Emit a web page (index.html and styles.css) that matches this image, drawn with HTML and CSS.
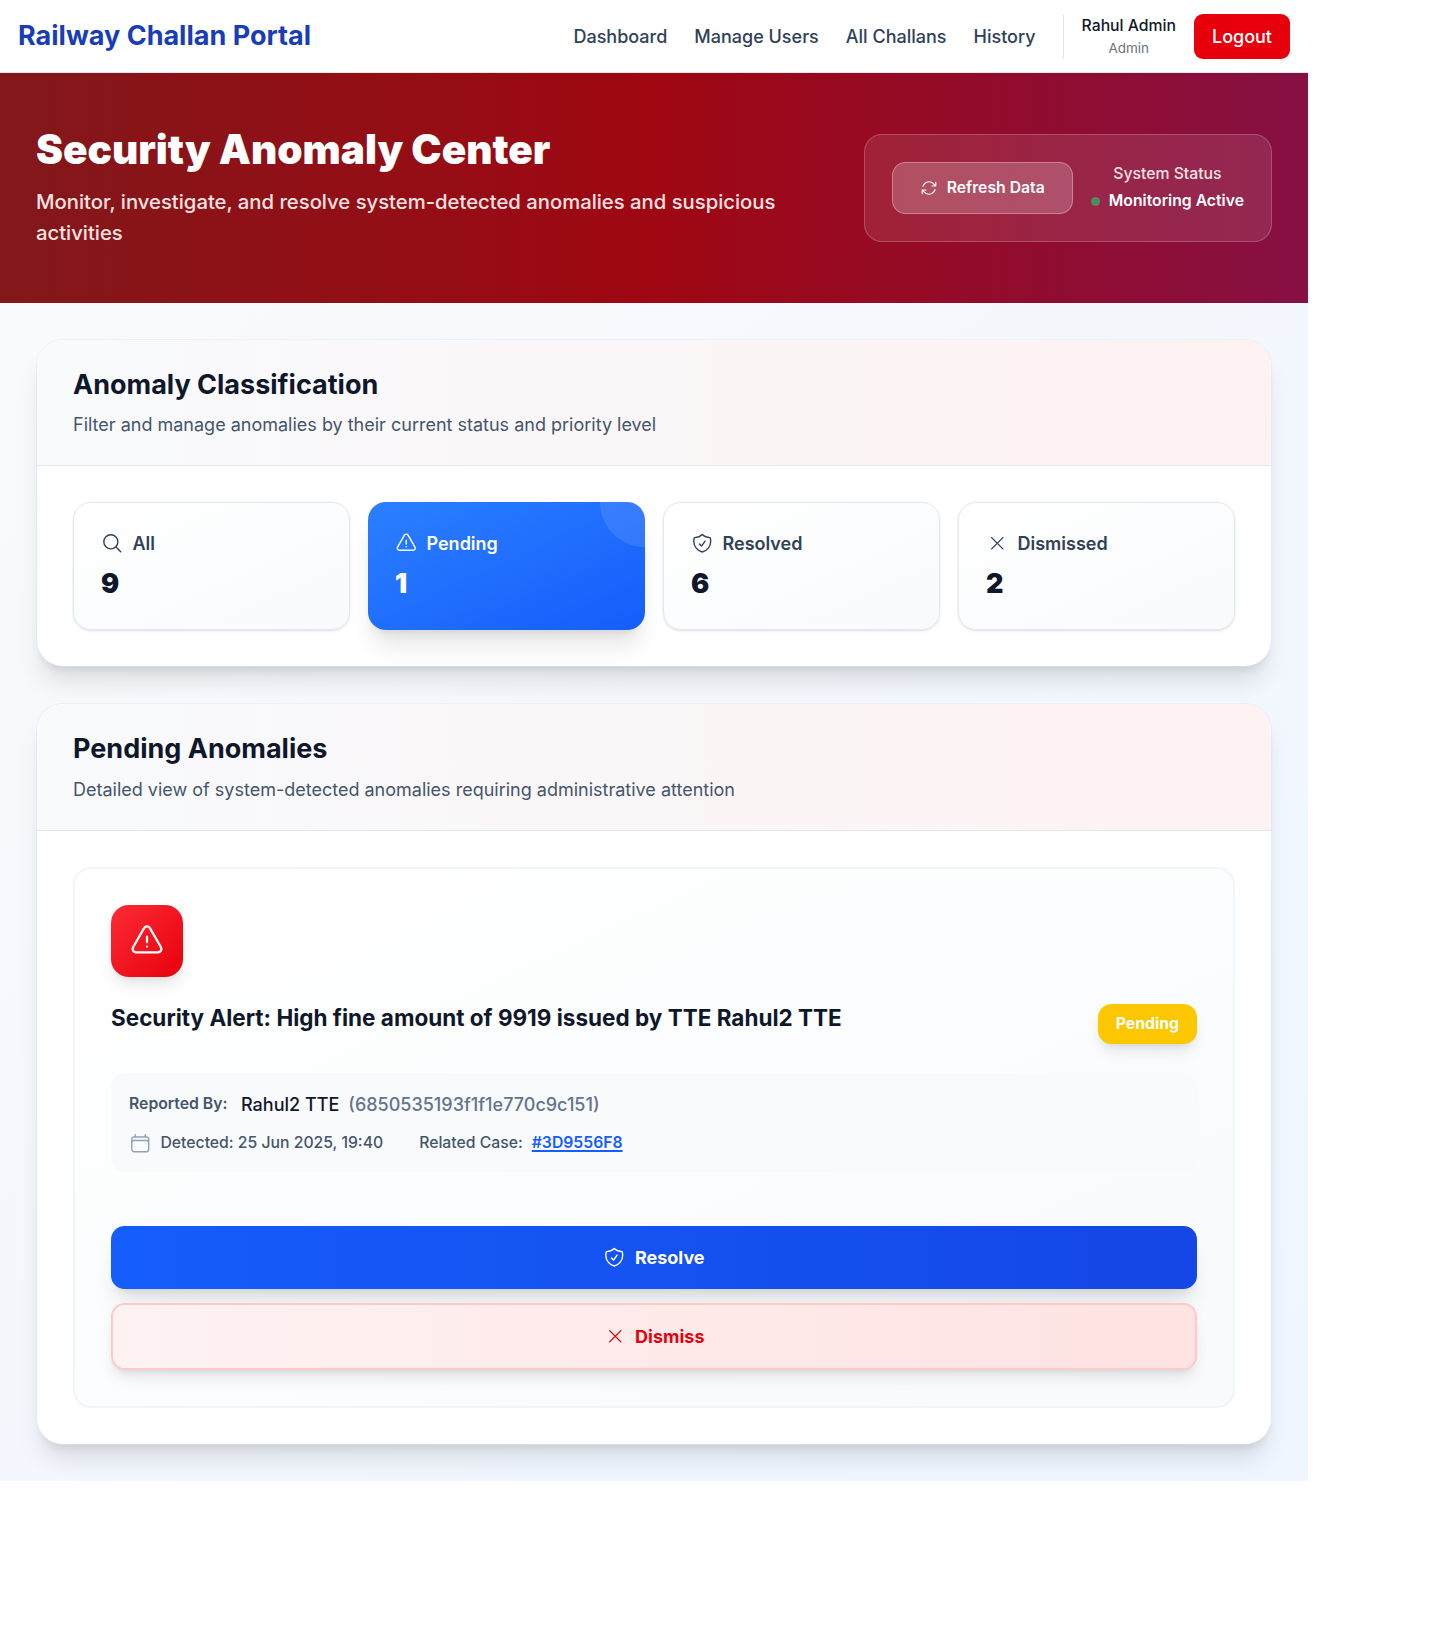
FILE: index.html
```html
<!DOCTYPE html>
<html lang="en">
<head>
<meta charset="utf-8">
<title>Railway Challan Portal</title>
<link rel="stylesheet" href="styles.css">
</head>
<body>
<svg class="sprite" aria-hidden="true">
  <symbol id="i-search" viewBox="0 0 24 24"><path d="m21 21-5.197-5.197m0 0A7.5 7.5 0 1 0 5.196 5.196a7.5 7.5 0 0 0 10.607 10.607Z"/></symbol>
  <symbol id="i-warn" viewBox="0 0 24 24"><path d="M12 9v3.75m-9.303 3.376c-.866 1.5.217 3.374 1.948 3.374h14.71c1.73 0 2.813-1.874 1.948-3.374L13.949 3.378c-.866-1.5-3.032-1.5-3.898 0L2.697 16.126ZM12 15.75h.007v.008H12v-.008Z"/></symbol>
  <symbol id="i-shield" viewBox="0 0 24 24"><path d="M9 12.75 11.25 15 15 9.75m-3-7.036A11.959 11.959 0 0 1 3.598 6 11.99 11.99 0 0 0 3 9.749c0 5.592 3.824 10.29 9 11.623 5.176-1.332 9-6.03 9-11.622 0-1.31-.21-2.571-.598-3.751h-.152c-3.196 0-6.1-1.248-8.25-3.285Z"/></symbol>
  <symbol id="i-x" viewBox="0 0 24 24"><path d="M6 18 18 6M6 6l12 12"/></symbol>
  <symbol id="i-refresh" viewBox="0 0 24 24"><path d="M16.023 9.348h4.992v-.001M2.985 19.644v-4.992m0 0h4.992m-4.993 0 3.181 3.183a8.25 8.25 0 0 0 13.803-3.7M4.031 9.865a8.25 8.25 0 0 1 13.803-3.7l3.181 3.182m0-4.991v4.99"/></symbol>
  <symbol id="i-calendar" viewBox="0 0 24 24"><path d="M6.75 3v2.25M17.25 3v2.25M3 18.75V7.5a2.25 2.25 0 0 1 2.25-2.25h13.5A2.25 2.25 0 0 1 21 7.5v11.25m-18 0A2.25 2.25 0 0 0 5.25 21h13.5A2.25 2.25 0 0 0 21 18.75m-18 0v-7.5A2.25 2.25 0 0 1 5.25 9h13.5A2.25 2.25 0 0 1 21 11.25v7.5"/></symbol>
</svg>
<div class="page">
  <header class="topbar">
    <div class="brand">Railway Challan Portal</div>
    <nav class="nav">
      <a>Dashboard</a>
      <a>Manage Users</a>
      <a>All Challans</a>
      <a>History</a>
      <div class="account">
        <div class="user">
          <span class="user-name">Rahul Admin</span>
          <span class="user-role">Admin</span>
        </div>
        <button class="logout">Logout</button>
      </div>
    </nav>
  </header>

  <section class="hero">
    <div class="hero-text">
      <h1>Security Anomaly Center</h1>
      <p>Monitor, investigate, and resolve system-detected anomalies and suspicious activities</p>
    </div>
    <div class="glass">
      <button class="refresh"><svg class="icon icon-sm"><use href="#i-refresh"/></svg>Refresh Data</button>
      <div class="status">
        <span class="status-label">System Status</span>
        <span class="status-value"><i class="dot"></i>Monitoring Active</span>
      </div>
    </div>
  </section>

  <main class="main">
    <section class="card">
      <div class="card-head">
        <h2>Anomaly Classification</h2>
        <p>Filter and manage anomalies by their current status and priority level</p>
      </div>
      <div class="card-body tiles">
        <div class="tile">
          <div class="tile-label"><svg class="icon"><use href="#i-search"/></svg>All</div>
          <div class="tile-count">9</div>
        </div>
        <div class="tile tile-active">
          <div class="tile-label"><svg class="icon"><use href="#i-warn"/></svg>Pending</div>
          <div class="tile-count">1</div>
        </div>
        <div class="tile">
          <div class="tile-label"><svg class="icon"><use href="#i-shield"/></svg>Resolved</div>
          <div class="tile-count">6</div>
        </div>
        <div class="tile">
          <div class="tile-label"><svg class="icon"><use href="#i-x"/></svg>Dismissed</div>
          <div class="tile-count">2</div>
        </div>
      </div>
    </section>

    <section class="card">
      <div class="card-head">
        <h2>Pending Anomalies</h2>
        <p>Detailed view of system-detected anomalies requiring administrative attention</p>
      </div>
      <div class="card-body">
        <article class="anomaly">
          <div class="alert-icon"><svg class="icon icon-lg"><use href="#i-warn"/></svg></div>
          <div class="anomaly-head">
            <h3>Security Alert: High fine amount of 9919 issued by TTE Rahul2 TTE</h3>
            <span class="badge">Pending</span>
          </div>
          <div class="details">
            <div class="reporter">
              <span class="reporter-label">Reported By:</span>
              <span class="reporter-name">Rahul2 TTE</span>
              <span class="reporter-id">(6850535193f1f1e770c9c151)</span>
            </div>
            <div class="meta">
              <span class="meta-item"><svg class="icon icon-muted"><use href="#i-calendar"/></svg>Detected: 25 Jun 2025, 19:40</span>
              <span class="meta-item">Related Case: <a class="case-link">#3D9556F8</a></span>
            </div>
          </div>
          <div class="actions">
            <button class="action resolve"><svg class="icon"><use href="#i-shield"/></svg>Resolve</button>
            <button class="action dismiss"><svg class="icon"><use href="#i-x"/></svg>Dismiss</button>
          </div>
        </article>
      </div>
    </section>
  </main>
</div>
</body>
</html>
```
FILE: styles.css
```css
html { font-size: 18px; }
*, *::before, *::after { box-sizing: border-box; }
body {
  margin: 0;
  background: #fff;
  color: #0f172b;
  font-family: Inter, "Liberation Sans", sans-serif;
  line-height: 1.5;
}
h1, h2, h3, p { margin: 0; }
button { font: inherit; border: 0; margin: 0; padding: 0; }
.sprite { position: absolute; width: 0; height: 0; }
.icon {
  width: 1.25rem;
  height: 1.25rem;
  flex: none;
  fill: none;
  stroke: currentColor;
  stroke-width: 1.5;
  stroke-linecap: round;
  stroke-linejoin: round;
}
.icon-sm { width: 1rem; height: 1rem; }
.icon-lg { width: 2rem; height: 2rem; }
.icon-muted { color: #90a1b9; }

.page { width: 1308px; }

/* Top bar */
.topbar {
  display: flex;
  align-items: center;
  justify-content: space-between;
  padding: .75rem 1rem;
  border-bottom: 1px solid #e5e7eb;
  background: #fff;
}
.brand { font-size: 1.5rem; line-height: 2rem; font-weight: 700; color: #193cb8; }
.nav { display: flex; align-items: center; gap: 1.5rem; color: #314158; font-weight: 500; }
.account {
  display: flex;
  align-items: center;
  gap: 1rem;
  padding-left: 1rem;
  border-left: 1px solid #e5e7eb;
}
.user { display: flex; flex-direction: column; align-items: center; }
.user-name { font-size: .875rem; line-height: 1.25rem; font-weight: 500; color: #101828; }
.user-role { font-size: .75rem; line-height: 1rem; font-weight: 400; color: #6a7282; margin-top: .125rem; }
.logout {
  padding: .5rem 1rem;
  border-radius: .5rem;
  background: #e7000b;
  color: #fff;
  font-weight: 500;
}

/* Hero */
.hero {
  display: flex;
  align-items: center;
  justify-content: space-between;
  gap: 2rem;
  padding: 3rem 2rem;
  background: linear-gradient(to right, #82181a, #9f0712, #861043);
}
.hero h1 {
  margin-bottom: .75rem;
  font-size: 2.25rem;
  line-height: 2.5rem;
  font-weight: 900;
  color: #fff;
}
.hero p { font-size: 1.125rem; line-height: 1.75rem; font-weight: 500; color: #ffe2e2; }
.glass {
  display: flex;
  flex: none;
  align-items: center;
  gap: 1rem;
  padding: 1.5rem;
  border: 1px solid rgba(255, 255, 255, .2);
  border-radius: 1rem;
  background: rgba(255, 255, 255, .1);
  font-size: .875rem;
  line-height: 1.25rem;
}
.refresh {
  display: flex;
  align-items: center;
  gap: .5rem;
  padding: .75rem 1.5rem;
  border: 1px solid rgba(255, 255, 255, .3);
  border-radius: .75rem;
  background: rgba(255, 255, 255, .2);
  color: #fff;
  font-weight: 600;
}
.status { display: flex; flex-direction: column; align-items: center; gap: .25rem; }
.status-label { color: #ffe2e2; font-weight: 500; }
.status-value { display: flex; align-items: center; gap: .5rem; color: #fff; font-weight: 600; }
.dot { width: .5rem; height: .5rem; border-radius: 50%; background: #4f8a5f; }

/* Cards */
.main {
  display: flex;
  flex-direction: column;
  gap: 2rem;
  padding: 2rem;
  background: linear-gradient(to bottom right, #f8fafc, #eff6ff);
}
.card {
  border: 1px solid rgba(226, 232, 240, .5);
  border-radius: 1.5rem;
  background: #fff;
  background-clip: padding-box;
  box-shadow: 0 20px 25px -5px rgba(0, 0, 0, .1), 0 8px 10px -6px rgba(0, 0, 0, .1);
}
.card-head {
  padding: 1.5rem 2rem;
  border-bottom: 1px solid #e2e8f0;
  border-radius: 1.45rem 1.45rem 0 0;
  background: linear-gradient(to right, #f8fafc, #fef2f2);
}
.card-head h2 { margin-bottom: .485rem; font-size: 1.5rem; line-height: 2rem; font-weight: 700; }
.card-head p { color: #45556c; }
.card-body { padding: 2rem; }

/* Filter tiles */
.tiles { display: grid; grid-template-columns: repeat(4, 1fr); gap: 1rem; }
.tile {
  padding: 1.5rem;
  border: 1px solid #e2e8f0;
  border-radius: 1rem;
  background: linear-gradient(to bottom right, #fff, #f8fafc);
  box-shadow: 0 1px 3px rgba(0, 0, 0, .1), 0 1px 2px -1px rgba(0, 0, 0, .1);
}
.tile-label {
  display: flex;
  align-items: center;
  gap: .5rem;
  margin-bottom: .5rem;
  font-weight: 600;
  color: #314158;
}
.tile-count { font-size: 1.5rem; line-height: 2rem; font-weight: 900; }
.tile-active {
  padding: calc(1.5rem + 1px) 1.5rem;
  border: 0;
  background:
    radial-gradient(circle at 100% 0, rgba(255, 255, 255, .1) 44.5px, transparent 45.5px),
    linear-gradient(to bottom right, #2b7fff, #155dfc);
  box-shadow: 0 20px 25px -5px rgba(0, 0, 0, .1), 0 8px 10px -6px rgba(0, 0, 0, .1);
  color: #fff;
}
.tile-active .tile-label { color: #fff; }

/* Anomaly */
.anomaly {
  padding: 2rem;
  border: 2px solid #f1f5f9;
  border-radius: 1rem;
  background: linear-gradient(to bottom right, #fff, #f8fafc);
}
.alert-icon {
  display: flex;
  align-items: center;
  justify-content: center;
  width: 4rem;
  height: 4rem;
  margin-bottom: 1.5rem;
  border-radius: 1rem;
  background: linear-gradient(to bottom right, #fb2c36, #e7000b);
  color: #fff;
  box-shadow: 0 10px 15px -3px rgba(0, 0, 0, .1), 0 4px 6px -4px rgba(0, 0, 0, .1);
}
.anomaly-head {
  display: flex;
  align-items: flex-start;
  justify-content: space-between;
  margin-bottom: 1.6rem;
}
.anomaly-head h3 { font-size: 1.25rem; line-height: 1.25; font-weight: 700; }
.badge {
  padding: .5rem 1rem;
  border-radius: .75rem;
  background: #fdc700;
  color: #fff;
  font-size: .875rem;
  line-height: 1.25rem;
  font-weight: 700;
  box-shadow: 0 10px 15px -3px rgba(0, 0, 0, .1), 0 4px 6px -4px rgba(0, 0, 0, .1);
}
.details {
  display: flex;
  flex-direction: column;
  gap: .75rem;
  margin-bottom: 3rem;
  padding: 1rem;
  border-radius: .75rem;
  background: #f8fafc;
}
.reporter { display: flex; align-items: center; }
.reporter-label {
  margin-right: .75rem;
  font-size: .875rem;
  line-height: 1.25rem;
  font-weight: 600;
  color: #45556c;
}
.reporter-name { margin-right: .5rem; font-weight: 500; color: #0f172b; }
.reporter-id { font-weight: 500; color: #62748e; }
.meta { display: flex; gap: 2rem; font-size: .875rem; line-height: 1.25rem; font-weight: 500; color: #45556c; }
.meta-item { display: flex; align-items: center; gap: .5rem; }
.case-link {
  color: #155dfc;
  font-weight: 600;
  text-decoration: underline;
  text-decoration-thickness: 2px;
  text-underline-offset: 2px;
}
.actions { display: flex; flex-direction: column; gap: .75rem; }
.action {
  display: flex;
  align-items: center;
  justify-content: center;
  gap: .5rem;
  padding: 1rem;
  border-radius: .75rem;
  font-weight: 700;
}
.resolve {
  background: linear-gradient(to right, #155dfc, #1447e6);
  color: #fff;
  box-shadow: 0 20px 25px -5px rgba(0, 0, 0, .1), 0 8px 10px -6px rgba(0, 0, 0, .1);
}
.dismiss {
  border: 2px solid #ffc9c9;
  background: linear-gradient(to right, #fef2f2, #ffe2e2);
  color: #e7000b;
  box-shadow: 0 10px 15px -3px rgba(0, 0, 0, .1), 0 4px 6px -4px rgba(0, 0, 0, .1);
}
```
